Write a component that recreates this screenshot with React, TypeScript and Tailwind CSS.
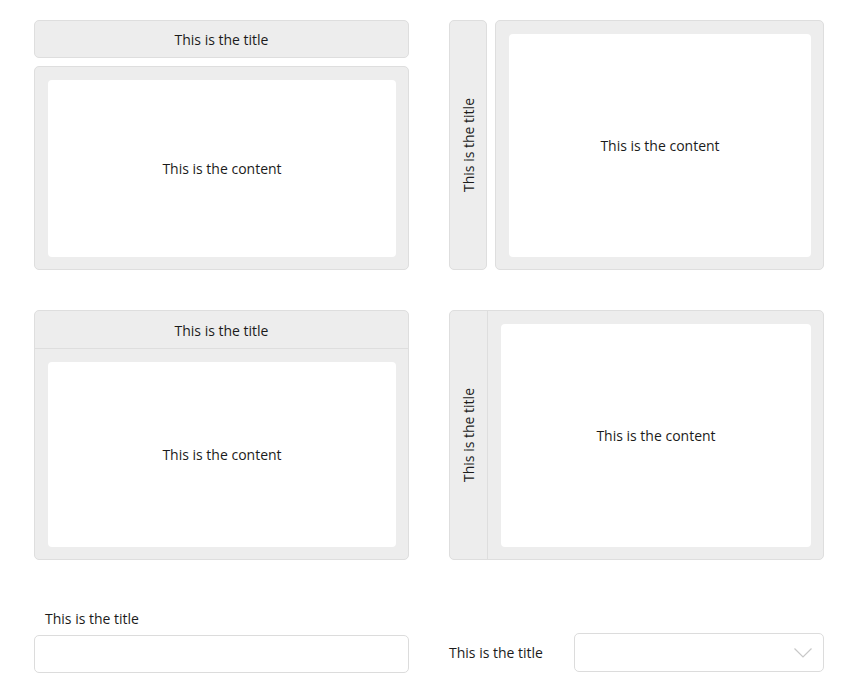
import React from "react";

const font = { fontFamily: '"Open Sans", "Noto Sans", sans-serif' };

function Box({ children, className = "" }: { children?: React.ReactNode; className?: string }) {
  return (
    <div className={`rounded-[5px] border border-[#dedede] bg-[#ededed] ${className}`}>{children}</div>
  );
}

function WhiteContent({ className = "" }: { className?: string }) {
  return (
    <div className={`flex flex-1 items-center justify-center rounded-[4px] bg-white ${className}`}>
      <span>This is the content</span>
    </div>
  );
}

function VText() {
  return <span className="rotate-180 [writing-mode:vertical-rl]">This is the title</span>;
}

export default function App() {
  return (
    <div className="min-h-[695px] w-[853px] bg-white pl-[34px] pt-[20px] text-[14px] text-[#1b1b1b]" style={font}>
      <div className="grid grid-cols-[375px_375px] gap-x-[40px] gap-y-[40px]">
        {/* Panel 1 */}
        <div className="flex h-[250px] flex-col gap-[8px]">
          <Box className="flex h-[38px] items-center justify-center pt-px">This is the title</Box>
          <Box className="flex flex-1 pb-[12px] pl-[13px] pr-[12px] pt-[13px]">
            <WhiteContent />
          </Box>
        </div>
        {/* Panel 2 */}
        <div className="flex h-[250px] gap-[8px]">
          <Box className="flex w-[38px] items-center justify-center">
            <VText />
          </Box>
          <Box className="flex flex-1 pb-[12px] pl-[13px] pr-[12px] pt-[13px]">
            <WhiteContent />
          </Box>
        </div>
        {/* Panel 3 */}
        <Box className="flex h-[250px] flex-col">
          <div className="flex h-[38px] items-center justify-center border-b border-[#dedede] pt-px">This is the title</div>
          <div className="flex flex-1 pb-[12px] pl-[13px] pr-[12px] pt-[13px]">
            <WhiteContent />
          </div>
        </Box>
        {/* Panel 4 */}
        <Box className="flex h-[250px]">
          <div className="flex w-[38px] items-center justify-center border-r border-[#dedede]">
            <VText />
          </div>
          <div className="flex flex-1 pb-[12px] pl-[13px] pr-[12px] pt-[13px]">
            <WhiteContent />
          </div>
        </Box>
        {/* Row 3 */}
        <div className="flex flex-col pt-[9px]">
          <span className="mb-[6px] pl-[11px] leading-[20px]">This is the title</span>
          <div className="h-[38px] rounded-[5px] border border-[#dcdcdc] bg-white" />
        </div>
        <div className="flex items-end pb-[1px]">
          <div className="flex w-full items-center">
            <span className="w-[125px] pt-px leading-[20px]">This is the title</span>
            <div className="flex h-[39px] flex-1 items-center justify-end rounded-[5px] border border-[#dcdcdc] bg-white pr-[11px]">
              <svg width="18" height="10" viewBox="0 0 18 10" fill="none">
                <path d="M0.5 0.5 L9 9 L17.5 0.5" stroke="#c8c8c8" strokeWidth="1.2" />
              </svg>
            </div>
          </div>
        </div>
      </div>
    </div>
  );
}
